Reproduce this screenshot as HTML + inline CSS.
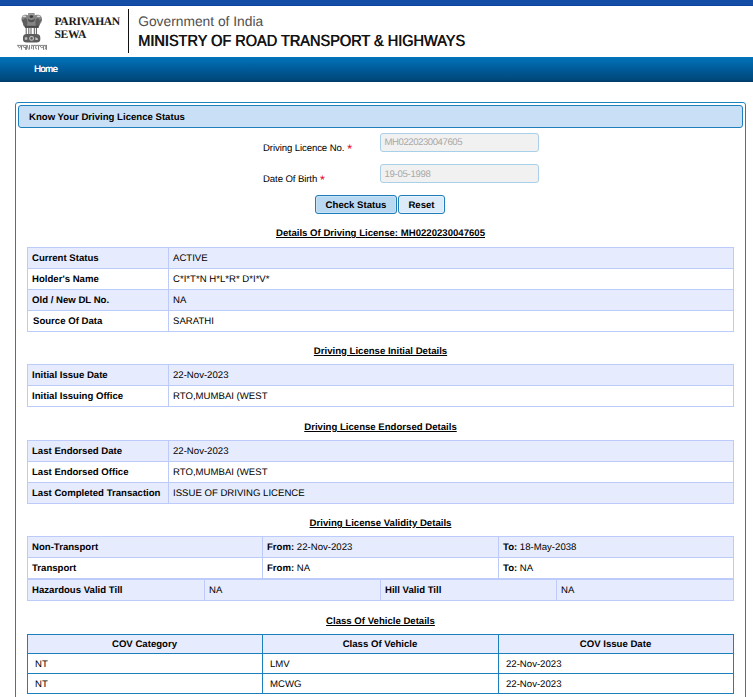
<!DOCTYPE html>
<html><head><meta charset="utf-8"><title>Know Your Driving Licence Status</title>
<style>
html,body{margin:0;padding:0;background:#fff;}
body{width:753px;height:697px;overflow:hidden;position:relative;font-family:"Liberation Sans",sans-serif;}
.t{position:absolute;white-space:nowrap;line-height:1;text-rendering:geometricPrecision;}
.b{position:absolute;box-sizing:content-box;}
</style></head><body>
<div class="b" style="left:0px;top:0px;width:753px;height:5px;background:#134da6"></div>
<div class="b" style="left:0px;top:5px;width:753px;height:1px;background:#0a43a0"></div>
<svg class="b" style="left:14px;top:10px" width="36" height="44" viewBox="0 0 36 44">
<path d="M7.5 9.5 C7.5 6 9 4.7 11.5 4.7 C13 4.7 13.8 5 14.1 5.5 L14.1 3.8 Q14.1 3 15 3 L19.8 3 Q20.7 3 20.7 3.8 L20.7 5.5 C21 5 22 4.7 23.5 4.7 C26 4.7 28 6 28 9.5 C28 12 26.5 13.5 25.5 15 L24.5 17.9 L11 17.9 L10 15 C9 13.5 7.5 12 7.5 9.5 Z" fill="#858585"/>
<ellipse cx="11.2" cy="12.5" rx="2.2" ry="4.2" fill="#5e5e5e"/>
<ellipse cx="23.6" cy="12.5" rx="2.2" ry="4.2" fill="#5e5e5e"/>
<path d="M14 8.5 Q17.4 12 20.8 8.5 L20.5 11 Q17.4 13.5 14.3 11 Z" fill="#505050"/>
<ellipse cx="17.4" cy="6.6" rx="1.7" ry="1.4" fill="#3a3a3a"/>
<ellipse cx="10.3" cy="6.3" rx="1.9" ry="0.9" fill="#d6d6d6"/>
<ellipse cx="24.6" cy="6.3" rx="1.9" ry="0.9" fill="#d6d6d6"/>
<rect x="15" y="3.7" width="4.8" height="0.9" fill="#b5b5b5"/>
<path d="M8.3 9.5 Q9 11 9.6 11.5 M27.2 9.5 Q26.5 11 25.9 11.5" stroke="#444" stroke-width="0.9" fill="none"/>
<path d="M11 16.8 H24.5" stroke="#484848" stroke-width="2"/>
<path d="M12.2 17.5 V24 M14.8 17.5 V24 M17 17.5 V24 M20.3 17.5 V24 M22.4 17.5 V24" stroke="#5a5a5a" stroke-width="1"/>
<path d="M9 27.5 Q9 24 12.5 24 L22.5 24 Q26.3 24 26.3 27.5 L26.3 29.5 Q26.3 32.4 22.5 32.4 L12.5 32.4 Q9 32.4 9 29.5 Z" fill="#5c5c5c"/>
<circle cx="17.6" cy="28.4" r="1.9" fill="none" stroke="#c8c8c8" stroke-width="1.1"/>
<path d="M10.8 27.2 h2.5 v2.6 h-2.5 Z M21.3 27.2 q2 0 2.6 1.5 v1.2 h-2.6 Z" fill="#bdbdbd"/>
<path d="M3 35.4 H14 M17 35.4 H33" stroke="#6a6a6a" stroke-width="0.8"/>
<path d="M4 36 q1.5 3.5 3 0 M7.5 36 v3.8 M9 36 q1 3 2.5 1 v2.8 M12.5 36 v3.8 M13.5 36 q0.5 3 1 3.5 M15.5 35 v4.5 M18 36 q-1.2 2.5 0 3 M19.5 36 v3.6 M22 36 q-1.5 3 1 3 M24.5 36 v3.8 M26 36 q1.5 3 3 1 M29.5 36 v3.8 M31 36 q1.5 1.5 0 3.5 M32.5 35.4 v4.4" stroke="#5a5a5a" stroke-width="0.75" fill="none"/>
</svg>
<div class="t " style="left:54.5px;top:15.88px;font-size:11.6px;font-weight:bold;color:#1a1a1a;font-family:'Liberation Serif',serif;letter-spacing:-0.35px">PARIVAHAN</div>
<div class="t " style="left:54.5px;top:28.98px;font-size:11.6px;font-weight:bold;color:#1a1a1a;font-family:'Liberation Serif',serif;letter-spacing:-0.35px">SEWA</div>
<div class="b" style="left:128px;top:9px;width:1px;height:44px;background:#111"></div>
<div class="t " style="left:138.2px;top:14.52px;font-size:13.8px;font-weight:normal;color:#505050;">Government of India</div>
<div class="t " style="left:137.8px;top:33.66px;font-size:16px;font-weight:normal;color:#111;text-shadow:0.6px 0 0 #111;transform:scaleX(0.907);transform-origin:0 0">MINISTRY OF ROAD TRANSPORT &amp; HIGHWAYS</div>
<div class="b" style="left:0;top:57px;width:753px;height:25px;background:linear-gradient(#0074bb,#005a98 50%,#004a7e 88%,#003c68)"></div>
<div class="t " style="left:34px;top:64.97px;font-size:9.6px;font-weight:normal;color:#fff;letter-spacing:-0.6px;text-shadow:0.25px 0 0 #fff">Home</div>
<div class="b" style="left:15px;top:102px;width:729px;height:620px;border:1px solid #1e82bf;border-radius:3px"></div>
<div class="b" style="left:18px;top:105px;width:723px;height:21px;border:1px solid #1f7fbd;border-radius:3px;background:#c9dff6"></div>
<div class="t " style="left:29px;top:112.87px;font-size:9.6px;font-weight:bold;color:#000;">Know Your Driving Licence Status</div>
<div class="t " style="left:263px;top:143.87px;font-size:9.6px;font-weight:normal;color:#000;letter-spacing:-0.1px">Driving Licence No.</div>
<div class="t " style="left:347.2px;top:143.42px;font-size:12.5px;font-weight:normal;color:#e8001c;">*</div>
<div class="t " style="left:263px;top:174.87px;font-size:9.6px;font-weight:normal;color:#000;letter-spacing:-0.1px">Date Of Birth</div>
<div class="t " style="left:320px;top:174.42px;font-size:12.5px;font-weight:normal;color:#e8001c;">*</div>
<div class="b" style="left:380px;top:133px;width:157px;height:17px;border:1px solid #a8d0e8;border-radius:3px;background:#f2f1f1"></div>
<div class="b" style="left:380px;top:164px;width:157px;height:17px;border:1px solid #a8d0e8;border-radius:3px;background:#f2f1f1"></div>
<div class="t " style="left:384.5px;top:138.27px;font-size:9.6px;font-weight:normal;color:#a8a8a8;letter-spacing:-0.45px">MH0220230047605</div>
<div class="t " style="left:384.5px;top:170.27px;font-size:9.6px;font-weight:normal;color:#a8a8a8;letter-spacing:-0.3px">19-05-1998</div>
<div class="b" style="left:315px;top:195px;width:80px;height:17px;border:1px solid #1f7eba;border-radius:3px;background:#b9d9f3;box-shadow:inset 0 0 0 1px #c8e2f7"></div>
<div class="b" style="left:398px;top:195px;width:45px;height:17px;border:1px solid #1f7eba;border-radius:3px;background:#dcebf9;box-shadow:inset 0 0 0 1px #eaf3fc"></div>
<div class="t" style="left:156px;width:400px;text-align:center;top:200.87px;font-size:9.6px;font-weight:bold;">Check Status</div>
<div class="t" style="left:221.5px;width:400px;text-align:center;top:200.87px;font-size:9.6px;font-weight:bold;">Reset</div>
<div class="t" style="left:180.5px;width:400px;text-align:center;top:229.17px;font-size:9.6px;font-weight:bold;text-decoration:underline;">Details Of Driving License: MH0220230047605</div>
<div class="b" style="left:27px;top:247px;width:706px;height:21px;background:#e6ebfd"></div>
<div class="b" style="left:27px;top:289px;width:706px;height:21px;background:#e6ebfd"></div>
<div class="b" style="left:27px;top:247px;width:707px;height:1px;background:#bccbfa"></div>
<div class="b" style="left:27px;top:247px;width:1px;height:22px;background:#bccbfa"></div>
<div class="b" style="left:168px;top:247px;width:1px;height:22px;background:#bccbfa"></div>
<div class="b" style="left:733px;top:247px;width:1px;height:22px;background:#bccbfa"></div>
<div class="t " style="left:32px;top:253.87px;font-size:9.6px;font-weight:bold;color:#000;">Current Status</div>
<div class="t " style="left:173px;top:253.87px;font-size:9.6px;font-weight:normal;color:#000;">ACTIVE</div>
<div class="b" style="left:27px;top:268px;width:707px;height:1px;background:#bccbfa"></div>
<div class="b" style="left:27px;top:268px;width:1px;height:22px;background:#bccbfa"></div>
<div class="b" style="left:168px;top:268px;width:1px;height:22px;background:#bccbfa"></div>
<div class="b" style="left:733px;top:268px;width:1px;height:22px;background:#bccbfa"></div>
<div class="t " style="left:32px;top:274.87px;font-size:9.6px;font-weight:bold;color:#000;">Holder's Name</div>
<div class="t " style="left:173px;top:274.87px;font-size:9.6px;font-weight:normal;color:#000;">C*I*T*N H*L*R* D*I*V*</div>
<div class="b" style="left:27px;top:289px;width:707px;height:1px;background:#bccbfa"></div>
<div class="b" style="left:27px;top:289px;width:1px;height:22px;background:#bccbfa"></div>
<div class="b" style="left:168px;top:289px;width:1px;height:22px;background:#bccbfa"></div>
<div class="b" style="left:733px;top:289px;width:1px;height:22px;background:#bccbfa"></div>
<div class="t " style="left:32px;top:295.87px;font-size:9.6px;font-weight:bold;color:#000;">Old / New DL No.</div>
<div class="t " style="left:173px;top:295.87px;font-size:9.6px;font-weight:normal;color:#000;">NA</div>
<div class="b" style="left:27px;top:310px;width:707px;height:1px;background:#bccbfa"></div>
<div class="b" style="left:27px;top:310px;width:1px;height:22px;background:#bccbfa"></div>
<div class="b" style="left:168px;top:310px;width:1px;height:22px;background:#bccbfa"></div>
<div class="b" style="left:733px;top:310px;width:1px;height:22px;background:#bccbfa"></div>
<div class="t " style="left:33px;top:316.87px;font-size:9.6px;font-weight:bold;color:#000;">Source Of Data</div>
<div class="t " style="left:173px;top:316.87px;font-size:9.6px;font-weight:normal;color:#000;">SARATHI</div>
<div class="b" style="left:27px;top:331px;width:707px;height:1px;background:#bccbfa"></div>
<div class="t" style="left:180.5px;width:400px;text-align:center;top:346.57px;font-size:9.6px;font-weight:bold;text-decoration:underline;">Driving License Initial Details</div>
<div class="b" style="left:27px;top:364px;width:706px;height:21px;background:#e6ebfd"></div>
<div class="b" style="left:27px;top:364px;width:707px;height:1px;background:#bccbfa"></div>
<div class="b" style="left:27px;top:364px;width:1px;height:22px;background:#bccbfa"></div>
<div class="b" style="left:168px;top:364px;width:1px;height:22px;background:#bccbfa"></div>
<div class="b" style="left:733px;top:364px;width:1px;height:22px;background:#bccbfa"></div>
<div class="t " style="left:32px;top:370.87px;font-size:9.6px;font-weight:bold;color:#000;">Initial Issue Date</div>
<div class="t " style="left:173px;top:370.87px;font-size:9.6px;font-weight:normal;color:#000;">22-Nov-2023</div>
<div class="b" style="left:27px;top:385px;width:707px;height:1px;background:#bccbfa"></div>
<div class="b" style="left:27px;top:385px;width:1px;height:22px;background:#bccbfa"></div>
<div class="b" style="left:168px;top:385px;width:1px;height:22px;background:#bccbfa"></div>
<div class="b" style="left:733px;top:385px;width:1px;height:22px;background:#bccbfa"></div>
<div class="t " style="left:32px;top:391.87px;font-size:9.6px;font-weight:bold;color:#000;">Initial Issuing Office</div>
<div class="t " style="left:173px;top:391.87px;font-size:9.6px;font-weight:normal;color:#000;">RTO,MUMBAI (WEST</div>
<div class="b" style="left:27px;top:406px;width:707px;height:1px;background:#bccbfa"></div>
<div class="t" style="left:180.5px;width:400px;text-align:center;top:422.97px;font-size:9.6px;font-weight:bold;text-decoration:underline;">Driving License Endorsed Details</div>
<div class="b" style="left:27px;top:440px;width:706px;height:21px;background:#e6ebfd"></div>
<div class="b" style="left:27px;top:482px;width:706px;height:21px;background:#e6ebfd"></div>
<div class="b" style="left:27px;top:440px;width:707px;height:1px;background:#bccbfa"></div>
<div class="b" style="left:27px;top:440px;width:1px;height:22px;background:#bccbfa"></div>
<div class="b" style="left:168px;top:440px;width:1px;height:22px;background:#bccbfa"></div>
<div class="b" style="left:733px;top:440px;width:1px;height:22px;background:#bccbfa"></div>
<div class="t " style="left:32px;top:446.87px;font-size:9.6px;font-weight:bold;color:#000;">Last Endorsed Date</div>
<div class="t " style="left:173px;top:446.87px;font-size:9.6px;font-weight:normal;color:#000;">22-Nov-2023</div>
<div class="b" style="left:27px;top:461px;width:707px;height:1px;background:#bccbfa"></div>
<div class="b" style="left:27px;top:461px;width:1px;height:22px;background:#bccbfa"></div>
<div class="b" style="left:168px;top:461px;width:1px;height:22px;background:#bccbfa"></div>
<div class="b" style="left:733px;top:461px;width:1px;height:22px;background:#bccbfa"></div>
<div class="t " style="left:32px;top:467.87px;font-size:9.6px;font-weight:bold;color:#000;">Last Endorsed Office</div>
<div class="t " style="left:173px;top:467.87px;font-size:9.6px;font-weight:normal;color:#000;">RTO,MUMBAI (WEST</div>
<div class="b" style="left:27px;top:482px;width:707px;height:1px;background:#bccbfa"></div>
<div class="b" style="left:27px;top:482px;width:1px;height:22px;background:#bccbfa"></div>
<div class="b" style="left:168px;top:482px;width:1px;height:22px;background:#bccbfa"></div>
<div class="b" style="left:733px;top:482px;width:1px;height:22px;background:#bccbfa"></div>
<div class="t " style="left:32px;top:488.87px;font-size:9.6px;font-weight:bold;color:#000;">Last Completed Transaction</div>
<div class="t " style="left:173px;top:488.87px;font-size:9.6px;font-weight:normal;color:#000;">ISSUE OF DRIVING LICENCE</div>
<div class="b" style="left:27px;top:503px;width:707px;height:1px;background:#bccbfa"></div>
<div class="t" style="left:180.5px;width:400px;text-align:center;top:518.87px;font-size:9.6px;font-weight:bold;text-decoration:underline;">Driving License Validity Details</div>
<div class="b" style="left:27px;top:536px;width:706px;height:21px;background:#e6ebfd"></div>
<div class="b" style="left:27px;top:536px;width:707px;height:1px;background:#bccbfa"></div>
<div class="b" style="left:27px;top:536px;width:1px;height:22px;background:#bccbfa"></div>
<div class="b" style="left:262px;top:536px;width:1px;height:22px;background:#bccbfa"></div>
<div class="b" style="left:498px;top:536px;width:1px;height:22px;background:#bccbfa"></div>
<div class="b" style="left:733px;top:536px;width:1px;height:22px;background:#bccbfa"></div>
<div class="t " style="left:32px;top:542.87px;font-size:9.6px;font-weight:bold;color:#000;">Non-Transport</div>
<div class="t " style="left:267px;top:542.87px;font-size:9.6px;font-weight:normal;color:#000;"><b>From:</b> 22-Nov-2023</div>
<div class="t " style="left:503px;top:542.87px;font-size:9.6px;font-weight:normal;color:#000;"><b>To:</b> 18-May-2038</div>
<div class="b" style="left:27px;top:557px;width:707px;height:1px;background:#bccbfa"></div>
<div class="b" style="left:27px;top:557px;width:1px;height:22px;background:#bccbfa"></div>
<div class="b" style="left:262px;top:557px;width:1px;height:22px;background:#bccbfa"></div>
<div class="b" style="left:498px;top:557px;width:1px;height:22px;background:#bccbfa"></div>
<div class="b" style="left:733px;top:557px;width:1px;height:22px;background:#bccbfa"></div>
<div class="t " style="left:32px;top:563.87px;font-size:9.6px;font-weight:bold;color:#000;">Transport</div>
<div class="t " style="left:267px;top:563.87px;font-size:9.6px;font-weight:normal;color:#000;"><b>From:</b> NA</div>
<div class="t " style="left:503px;top:563.87px;font-size:9.6px;font-weight:normal;color:#000;"><b>To:</b> NA</div>
<div class="b" style="left:27px;top:578px;width:707px;height:1px;background:#bccbfa"></div>
<div class="b" style="left:27px;top:579px;width:706px;height:21px;background:#e6ebfd"></div>
<div class="b" style="left:27px;top:579px;width:707px;height:1px;background:#bccbfa"></div>
<div class="b" style="left:27px;top:579px;width:1px;height:22px;background:#bccbfa"></div>
<div class="b" style="left:204px;top:579px;width:1px;height:22px;background:#bccbfa"></div>
<div class="b" style="left:380px;top:579px;width:1px;height:22px;background:#bccbfa"></div>
<div class="b" style="left:556px;top:579px;width:1px;height:22px;background:#bccbfa"></div>
<div class="b" style="left:733px;top:579px;width:1px;height:22px;background:#bccbfa"></div>
<div class="t " style="left:32px;top:585.87px;font-size:9.6px;font-weight:bold;color:#000;">Hazardous Valid Till</div>
<div class="t " style="left:209px;top:585.87px;font-size:9.6px;font-weight:normal;color:#000;">NA</div>
<div class="t " style="left:385px;top:585.87px;font-size:9.6px;font-weight:bold;color:#000;">Hill Valid Till</div>
<div class="t " style="left:561px;top:585.87px;font-size:9.6px;font-weight:normal;color:#000;">NA</div>
<div class="b" style="left:27px;top:600px;width:707px;height:1px;background:#bccbfa"></div>
<div class="t" style="left:180.5px;width:400px;text-align:center;top:616.67px;font-size:9.6px;font-weight:bold;text-decoration:underline;">Class Of Vehicle Details</div>
<div class="b" style="left:27px;top:634px;width:706px;height:19px;background:#e6ebfd"></div>
<div class="b" style="left:27px;top:634px;width:707px;height:1px;background:#1c80bd"></div>
<div class="b" style="left:27px;top:634px;width:1px;height:20px;background:#1c80bd"></div>
<div class="b" style="left:262px;top:634px;width:1px;height:20px;background:#1c80bd"></div>
<div class="b" style="left:498px;top:634px;width:1px;height:20px;background:#1c80bd"></div>
<div class="b" style="left:733px;top:634px;width:1px;height:20px;background:#1c80bd"></div>
<div class="t" style="left:-55.5px;width:400px;text-align:center;top:639.87px;font-size:9.6px;font-weight:bold;">COV Category</div>
<div class="t" style="left:180.0px;width:400px;text-align:center;top:639.87px;font-size:9.6px;font-weight:bold;">Class Of Vehicle</div>
<div class="t" style="left:415.5px;width:400px;text-align:center;top:639.87px;font-size:9.6px;font-weight:bold;">COV Issue Date</div>
<div class="b" style="left:27px;top:653px;width:707px;height:1px;background:#1c80bd"></div>
<div class="b" style="left:27px;top:653px;width:1px;height:21px;background:#1c80bd"></div>
<div class="b" style="left:262px;top:653px;width:1px;height:21px;background:#1c80bd"></div>
<div class="b" style="left:498px;top:653px;width:1px;height:21px;background:#1c80bd"></div>
<div class="b" style="left:733px;top:653px;width:1px;height:21px;background:#1c80bd"></div>
<div class="t " style="left:35px;top:659.87px;font-size:9.6px;font-weight:normal;color:#000;">NT</div>
<div class="t " style="left:270px;top:659.87px;font-size:9.6px;font-weight:normal;color:#000;">LMV</div>
<div class="t " style="left:506px;top:659.87px;font-size:9.6px;font-weight:normal;color:#000;">22-Nov-2023</div>
<div class="b" style="left:27px;top:673px;width:707px;height:1px;background:#1c80bd"></div>
<div class="b" style="left:27px;top:673px;width:1px;height:21px;background:#1c80bd"></div>
<div class="b" style="left:262px;top:673px;width:1px;height:21px;background:#1c80bd"></div>
<div class="b" style="left:498px;top:673px;width:1px;height:21px;background:#1c80bd"></div>
<div class="b" style="left:733px;top:673px;width:1px;height:21px;background:#1c80bd"></div>
<div class="t " style="left:35px;top:679.87px;font-size:9.6px;font-weight:normal;color:#000;">NT</div>
<div class="t " style="left:270px;top:679.87px;font-size:9.6px;font-weight:normal;color:#000;">MCWG</div>
<div class="t " style="left:506px;top:679.87px;font-size:9.6px;font-weight:normal;color:#000;">22-Nov-2023</div>
<div class="b" style="left:27px;top:693px;width:707px;height:1px;background:#1c80bd"></div>
</body></html>
